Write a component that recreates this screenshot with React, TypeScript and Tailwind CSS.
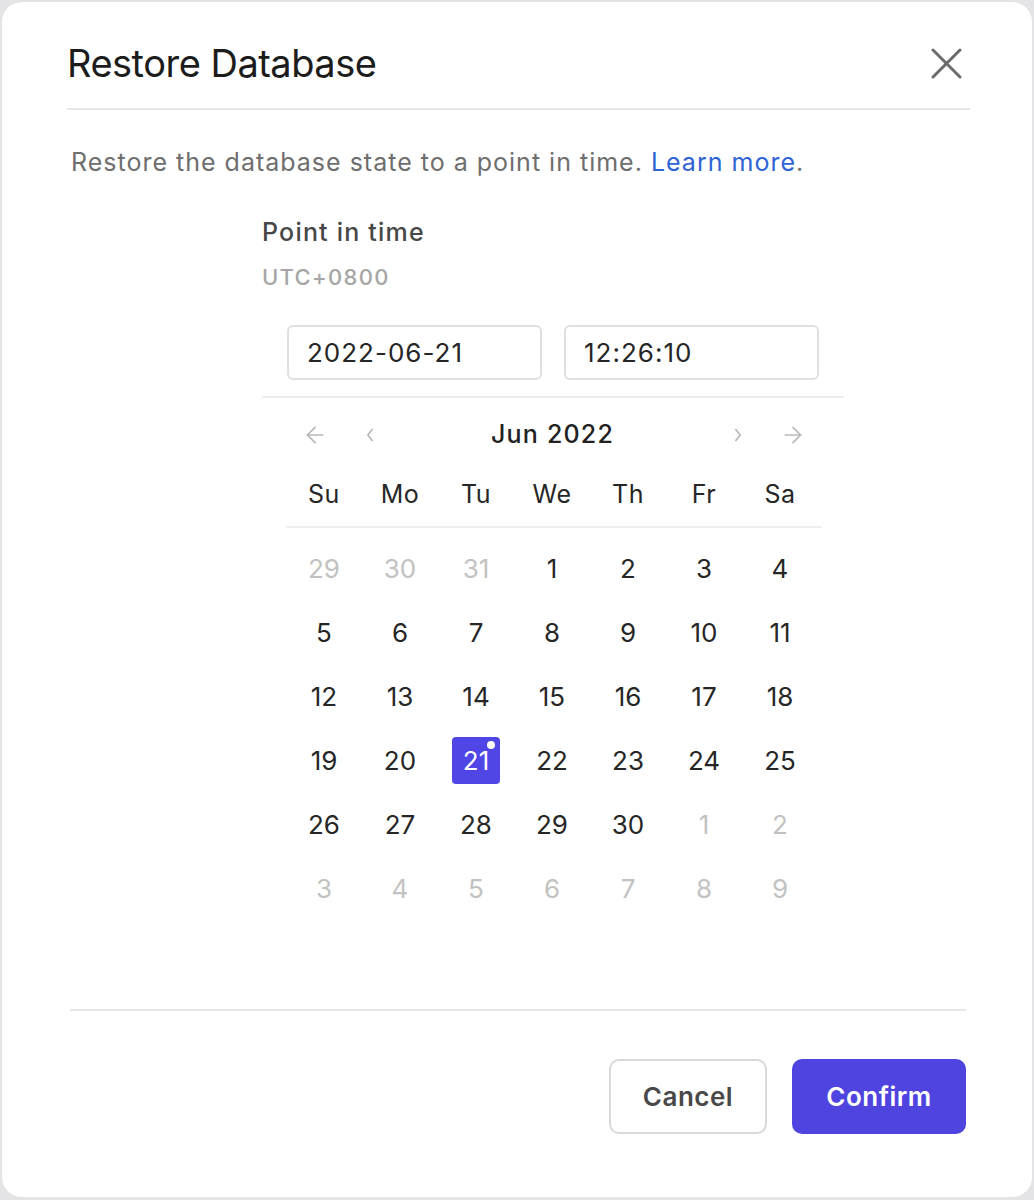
import React from "react";

const font = { fontFamily: "Inter, 'Noto Sans', sans-serif" };

function ArrowL() {
  return (
    <svg width="26" height="26" viewBox="0 0 24 24" fill="none" stroke="#b8b8b8" strokeWidth="1.6" strokeLinecap="round" strokeLinejoin="round">
      <path d="M19 12H5" />
      <path d="M12 19l-7-7 7-7" />
    </svg>
  );
}
function ArrowR() {
  return (
    <svg width="26" height="26" viewBox="0 0 24 24" fill="none" stroke="#b8b8b8" strokeWidth="1.6" strokeLinecap="round" strokeLinejoin="round">
      <path d="M5 12h14" />
      <path d="M12 5l7 7-7 7" />
    </svg>
  );
}
function ChevL() {
  return (
    <svg width="26" height="26" viewBox="0 0 24 24" fill="none" stroke="#b8b8b8" strokeWidth="1.6" strokeLinecap="round" strokeLinejoin="round">
      <path d="M14 17l-4-5 4-5" />
    </svg>
  );
}
function ChevR() {
  return (
    <svg width="26" height="26" viewBox="0 0 24 24" fill="none" stroke="#b8b8b8" strokeWidth="1.6" strokeLinecap="round" strokeLinejoin="round">
      <path d="M10 7l4 5-4 5" />
    </svg>
  );
}

const weeks: { d: number; muted?: boolean; sel?: boolean }[][] = [
  [{ d: 29, muted: true }, { d: 30, muted: true }, { d: 31, muted: true }, { d: 1 }, { d: 2 }, { d: 3 }, { d: 4 }],
  [{ d: 5 }, { d: 6 }, { d: 7 }, { d: 8 }, { d: 9 }, { d: 10 }, { d: 11 }],
  [{ d: 12 }, { d: 13 }, { d: 14 }, { d: 15 }, { d: 16 }, { d: 17 }, { d: 18 }],
  [{ d: 19 }, { d: 20 }, { d: 21, sel: true }, { d: 22 }, { d: 23 }, { d: 24 }, { d: 25 }],
  [{ d: 26 }, { d: 27 }, { d: 28 }, { d: 29 }, { d: 30 }, { d: 1, muted: true }, { d: 2, muted: true }],
  [{ d: 3, muted: true }, { d: 4, muted: true }, { d: 5, muted: true }, { d: 6, muted: true }, { d: 7, muted: true }, { d: 8, muted: true }, { d: 9, muted: true }],
];

export default function App() {
  return (
    <div className="w-[1034px] h-[1200px] bg-[#e4e4e6] pt-[2px] pl-[2px] pr-[2px] pb-[3px]" style={font}>
      <div className="h-full w-full bg-white rounded-[20px] flex flex-col">
        {/* Header */}
        <div className="pl-[65px] pr-[62px] pt-[37px]">
          <div className="flex items-center justify-between h-[48px]">
            <h1 className="text-[38px] leading-none text-[#1c1c1c] tracking-[-0.5px]">Restore Database</h1>
            <svg width="31" height="31" viewBox="0 0 31 31" className="mr-[8px]" fill="none" stroke="#6b6b6b" strokeWidth="3" strokeLinecap="round">
              <path d="M2 2L29 29" />
              <path d="M29 2L2 29" />
            </svg>
          </div>
          <div className="mt-[21px] h-[2px] bg-[#e6e6e6]" />
        </div>

        {/* Description */}
        <p className="pl-[69px] mt-[37px] text-[25px] leading-[30px] text-[#6e6e6e] tracking-[1px]">
          Restore the database state to a point in time. <span className="text-[#2e63d4]">Learn more</span>.
        </p>

        {/* Point in time block */}
        <div className="ml-[260px] w-[582px] mt-[40px]">
          <div className="text-[25px] leading-[30px] font-medium text-[#474747] tracking-[1.2px]">Point in time</div>
          <div className="mt-[17px] text-[22px] leading-[26px] font-medium text-[#a6a6a6] tracking-[1.3px]">UTC+0800</div>

          <div className="mt-[35px] flex gap-[22px] pl-[25px]">
            <div className="w-[255px] h-[55px] border-2 border-[#e0e0e0] rounded-[6px] flex items-center pl-[18px] text-[26px] text-[#262626] tracking-[1px]">
              2022-06-21
            </div>
            <div className="w-[255px] h-[55px] border-2 border-[#e0e0e0] rounded-[6px] flex items-center pl-[18px] text-[26px] text-[#262626] tracking-[1px]">
              12:26:10
            </div>
          </div>

          <div className="mt-[16px] h-[2px] bg-[#ededed]" />

          {/* Nav */}
          <div className="flex items-center h-[74px] pl-[40px] pr-[38px]">
            <ArrowL />
            <div className="ml-[29px]"><ChevL /></div>
            <div className="flex-1 text-center text-[25px] font-medium text-[#222] tracking-[1.2px] pr-[3px]">Jun 2022</div>
            <div className="mr-[29px]"><ChevR /></div>
            <ArrowR />
          </div>

          {/* Calendar grid */}
          <div className="ml-[24px] w-[536px]">
            <div className="w-[532px] grid grid-cols-7 h-[46px] items-center">
              {["Su", "Mo", "Tu", "We", "Th", "Fr", "Sa"].map((w) => (
                <div key={w} className="text-center text-[25px] text-[#262626] tracking-[0.5px]">{w}</div>
              ))}
            </div>
            <div className="h-[2px] bg-[#efefef] mt-[8px]" />
            <div className="mt-[8px] w-[532px]">
              {weeks.map((wk, i) => (
                <div key={i} className="grid grid-cols-7 h-[64px] items-center">
                  {wk.map((c, j) => (
                    <div key={j} className="flex justify-center">
                      {c.sel ? (
                        <div className="relative w-[48px] h-[47px] bg-[#4f46e5] rounded-[4px] flex items-center justify-center text-white text-[26px]">
                          {c.d}
                          <span className="absolute top-[4px] right-[5px] w-[8px] h-[8px] rounded-full bg-white" />
                        </div>
                      ) : (
                        <div className={"text-[26px] " + (c.muted ? "text-[#c2c2c2]" : "text-[#262626]")}>{c.d}</div>
                      )}
                    </div>
                  ))}
                </div>
              ))}
            </div>
          </div>
        </div>

        {/* Footer */}
        <div className="mt-auto pl-[68px] pr-[66px] pb-[63px]">
          <div className="h-[2px] bg-[#e6e6e6]" />
          <div className="mt-[48px] flex justify-end gap-[25px]">
            <button className="w-[158px] h-[75px] border-2 border-[#d9d9d9] rounded-[10px] text-[26px] font-semibold text-[#484848] bg-white tracking-[0.5px]">
              Cancel
            </button>
            <button className="w-[174px] h-[75px] rounded-[10px] text-[26px] font-semibold text-white bg-[#4f44e0] tracking-[0.5px]">
              Confirm
            </button>
          </div>
        </div>
      </div>
    </div>
  );
}
